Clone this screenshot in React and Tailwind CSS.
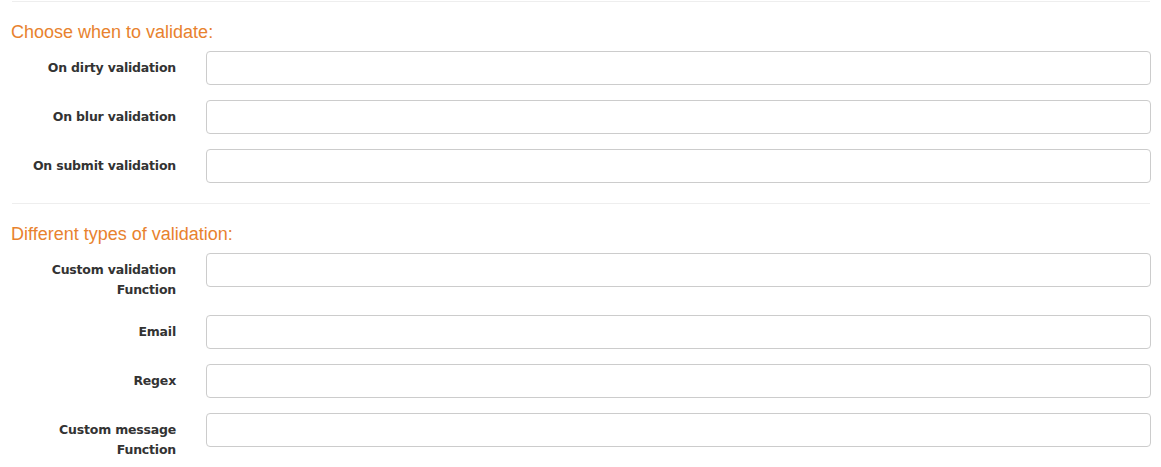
const sections = [
  {
    title: 'Choose when to validate:',
    fields: ['On dirty validation', 'On blur validation', 'On submit validation'],
  },
  {
    title: 'Different types of validation:',
    fields: ['Custom validation Function', 'Email', 'Regex', 'Custom message Function'],
  },
];

function Field({ label }) {
  return (
    <div className="flex items-start mb-[15px]">
      <label className="w-[176px] shrink-0 pt-[7px] text-right text-[12.5px] leading-[20px] font-bold text-[#333] font-['DejaVu_Sans',Verdana,sans-serif] tracking-[-0.2px]">
        {label.includes('Function') ? (
          <>
            {label.replace(' Function', '')}
            <br />
            Function
          </>
        ) : (
          label
        )}
      </label>
      <div className="ml-[30px] w-[945px]">
        <input
          type="text"
          className="block w-full h-[34px] rounded-[4px] border border-[#ccc] bg-white px-3 text-sm outline-none"
        />
      </div>
    </div>
  );
}

export default function App() {
  return (
    <div className="bg-white w-[1161px] h-[467px] overflow-hidden font-['Liberation_Sans',Arial,sans-serif]">
      {sections.map((s, i) => (
        <div key={s.title} className={i === 0 ? 'pt-[1px]' : 'pt-[5px]'}>
          <div className="ml-[12px] mr-[11px] border-t border-[#eee]" />
          <h3 className="ml-[11px] mt-[19px] mb-[8px] text-[18px] leading-[22px] text-[#e8822e] font-normal">
            {s.title}
          </h3>
          {s.fields.map((f) => (
            <Field key={f} label={f} />
          ))}
        </div>
      ))}
    </div>
  );
}
